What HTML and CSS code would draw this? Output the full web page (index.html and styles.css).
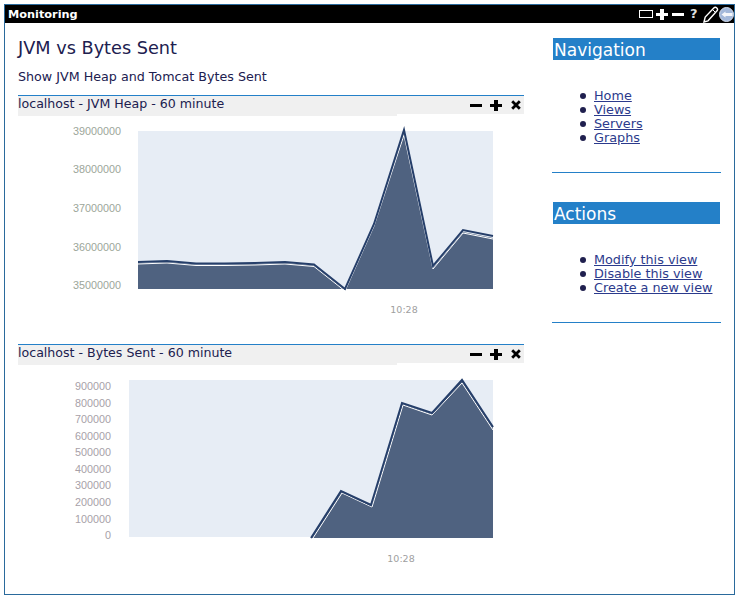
FILE: index.html
```html
<!DOCTYPE html>
<html lang="en">
<head>
    <meta charset="UTF-8">
    <title>Monitoring</title>
    <link rel="stylesheet" href="styles.css">
</head>
<body>
    <div class="frame">
        <div class="titlebar">
            <span class="titlebar-name">Monitoring</span>
            <div class="titlebar-icons">
                <svg width="14" height="8" viewBox="0 0 14 8"><rect x="0.5" y="0.500" width="13" height="7" fill="none" stroke="#fff"/></svg>
                <svg class="ic-plus" width="12" height="11" viewBox="0 0 12 11"><path d="M4 0h4v4h4v3H8v4H4V7H0V4h4z" fill="#fff"/></svg>
                <svg class="ic-minus" width="12" height="3" viewBox="0 0 12 3"><rect width="12" height="3" fill="#fff"/></svg>
                <span class="ic-help">?</span>
                <svg class="ic-pencil" width="16" height="17" viewBox="0 0 16 17"><path d="M1 16l1.200-5L10.800 2c1-1 2-1 3 0s1 2 0 3L5 14.800z" fill="#000" stroke="#fff" stroke-width="1.400"/><path d="M9.500 3.500l3 3" stroke="#fff" fill="none"/></svg>
                <svg class="ic-back" width="15" height="15" viewBox="0 0 15 15"><circle cx="7.500" cy="7.500" r="7" fill="#a3b8da" stroke="#d5deee"/><path d="M2.500 7.500L6.500 4.500v1.500h7v3h-7v1.500z" fill="#f4f6fa"/></svg>
            </div>
        </div>

        <div class="content">
            <div class="main">
                <h1>JVM vs Bytes Sent</h1>
                <p class="intro">Show JVM Heap and Tomcat Bytes Sent</p>

                <div class="portlet">
                    <div class="portlet-head">
                        <span class="portlet-title">localhost - JVM Heap - 60 minute</span>
                        <div class="portlet-btns">
                            <svg width="12" height="11" viewBox="0 0 12 11"><rect y="4" width="12" height="3"/></svg>
                            <svg width="12" height="11" viewBox="0 0 12 11"><path d="M4 0h4v4h4v3H8v4H4V7H0V4h4z"/></svg>
                            <svg class="btn-close" width="10" height="10" viewBox="0 0 10 10"><path d="M1.200 1.200l7.600 7.600M8.800 1.200l-7.600 7.600" stroke="#000" stroke-width="2.800"/></svg>
                        </div>
                    </div>
                    <svg class="chart" width="506" height="218" viewBox="18 114 506 218">
                        <rect x="138" y="131" width="355" height="158" fill="#e7edf5"/>
                        <polygon points="138,263 167,262 196,264.500 225,264.500 255,264 285,263 314,265.500 345,290 374,225 404,133 433,268 463,232 493,238 493,289 138,289" fill="#4f6280"/>
                        <polyline points="138,264 167,263 196,265.500 225,265.500 255,265 285,264 314,266.500 345,291 374,226 404,135 433,269 463,233 493,239" fill="none" stroke="#fff"/>
                        <polyline points="138,262 167,261 196,263.500 225,263.500 255,263 285,262 314,264.500 345,289 374,224 404,130 433,266 463,230 493,236" fill="none" stroke="#263f6a" stroke-width="2"/>
                        <g class="ylabel ylabel-green" text-anchor="end">
                            <text x="121" y="135">39000000</text>
                            <text x="121" y="173">38000000</text>
                            <text x="121" y="212">37000000</text>
                            <text x="121" y="251">36000000</text>
                            <text x="121" y="289">35000000</text>
                        </g>
                        <text class="xlabel" x="404" y="313" text-anchor="middle">10:28</text>
                    </svg>
                </div>

                <div class="portlet">
                    <div class="portlet-head">
                        <span class="portlet-title">localhost - Bytes Sent - 60 minute</span>
                        <div class="portlet-btns">
                            <svg width="12" height="11" viewBox="0 0 12 11"><rect y="4" width="12" height="3"/></svg>
                            <svg width="12" height="11" viewBox="0 0 12 11"><path d="M4 0h4v4h4v3H8v4H4V7H0V4h4z"/></svg>
                            <svg class="btn-close" width="10" height="10" viewBox="0 0 10 10"><path d="M1.200 1.200l7.600 7.600M8.800 1.200l-7.600 7.600" stroke="#000" stroke-width="2.800"/></svg>
                        </div>
                    </div>
                    <svg class="chart" width="506" height="218" viewBox="18 363 506 218">
                        <rect x="129" y="380" width="364" height="157" fill="#e7edf5"/>
                        <polygon points="311,538 341,492 372,506 402,404 432,414 462,381 493,428 493,538" fill="#4f6280"/>
                        <polyline points="313,538 342,493 372,507 403,405 432,415 462,383 493,430" fill="none" stroke="#fff"/>
                        <polyline points="311,538 341,491 371,505 402,403 432,413 462,380 493,427" fill="none" stroke="#263f6a" stroke-width="2"/>
                        <g class="ylabel" text-anchor="end">
                            <text x="111" y="390">900000</text>
                            <text x="111" y="407">800000</text>
                            <text x="111" y="423">700000</text>
                            <text x="111" y="440">600000</text>
                            <text x="111" y="456">500000</text>
                            <text x="111" y="473">400000</text>
                            <text x="111" y="489">300000</text>
                            <text x="111" y="506">200000</text>
                            <text x="111" y="523">100000</text>
                            <text x="111" y="539">0</text>
                        </g>
                        <text class="xlabel" x="401" y="562" text-anchor="middle">10:28</text>
                    </svg>
                </div>
            </div>

            <div class="sidebar">
                <div class="box">
                    <h2>Navigation</h2>
                    <ul>
                        <li><a href="#">Home</a></li>
                        <li><a href="#">Views</a></li>
                        <li><a href="#">Servers</a></li>
                        <li><a href="#">Graphs</a></li>
                    </ul>
                </div>
                <div class="box">
                    <h2>Actions</h2>
                    <ul>
                        <li><a href="#">Modify this view</a></li>
                        <li><a href="#">Disable this view</a></li>
                        <li><a href="#">Create a new view</a></li>
                    </ul>
                </div>
            </div>
        </div>
    </div>
</body>
</html>
```

FILE: styles.css
```css
body {
    margin: 4px 0 0 4px;
    background-color: #ffffff;
    font-family: "DejaVu Sans", Verdana, sans-serif;
    color: #20204f;
}

.frame {
    width: 729px;
    height: 589px;
    border: 1px solid #2a6a9c;
}

.titlebar {
    display: flex;
    justify-content: space-between;
    align-items: center;
    height: 18px;
    padding: 0 0 0 3px;
    background-color: #000000;
}

.titlebar-name {
    font-size: 11.300px;
    font-weight: bold;
    color: #ffffff;
}

.titlebar-icons {
    display: flex;
    align-items: center;
    height: 18px;
}

.ic-plus {
    margin-left: 3px;
}

.ic-minus {
    margin-left: 4px;
}

.ic-help {
    margin-left: 6px;
    width: 8px;
    font-size: 13px;
    font-weight: bold;
    line-height: 18px;
    color: #dddddd;
}

.ic-pencil {
    margin-left: 5px;
}

.content {
    display: flex;
    padding-left: 13px;
}

.main {
    width: 506px;
}

h1 {
    margin: 14px 0 0;
    font-size: 17.700px;
    font-weight: normal;
    line-height: 22px;
}

.intro {
    margin: 10px 0 0;
    font-size: 12.700px;
    line-height: 16px;
}

.portlet {
    margin-top: 10px;
    border-top: 1px solid #2480c8;
}

.portlet + .portlet {
    margin-top: 12px;
}

.portlet-head {
    display: flex;
    justify-content: space-between;
    height: 18px;
    background-color: #f0f0f0;
}

.portlet-title {
    width: 379px;
    height: 20px;
    background-color: #f0f0f0;
    font-size: 12.600px;
    line-height: 16px;
}

.portlet-btns {
    display: flex;
    align-items: center;
    gap: 8px;
    padding-right: 3px;
    height: 18px;
}

.btn-close {
    margin-left: 1px;
}

.chart {
    display: block;
}

.ylabel text {
    font-family: "Liberation Sans", Arial, sans-serif;
    font-size: 10.800px;
    fill: #a79fa8;
}

.ylabel-green text {
    fill: #9ca69a;
}

.xlabel {
    font-family: "DejaVu Sans", Verdana, sans-serif;
    font-size: 9.500px;
    fill: #a0a0a0;
}

.sidebar {
    width: 169px;
    margin-left: 28px;
    padding-top: 15px;
}

.box {
    margin-bottom: 30px;
    border-bottom: 1px solid #2480c8;
    padding-bottom: 27px;
}

.box + .box {
    margin-top: -1px;
}

.box h2 {
    margin: 0 1px;
    padding-left: 1px;
    height: 22px;
    background-color: #2480c8;
    font-size: 17px;
    font-weight: normal;
    line-height: 24px;
    color: #ffffff;
}

.box ul {
    margin: 29px 0 0;
    padding-left: 28px;
    font-size: 12.800px;
    line-height: 14px;
    list-style: none;
}

.box li {
    display: flex;
    align-items: center;
    gap: 8px;
}

.box li::before {
    content: "";
    width: 6px;
    height: 6px;
    border-radius: 50%;
    background-color: #20204f;
}

.box a {
    color: #2b3a8c;
}
```
